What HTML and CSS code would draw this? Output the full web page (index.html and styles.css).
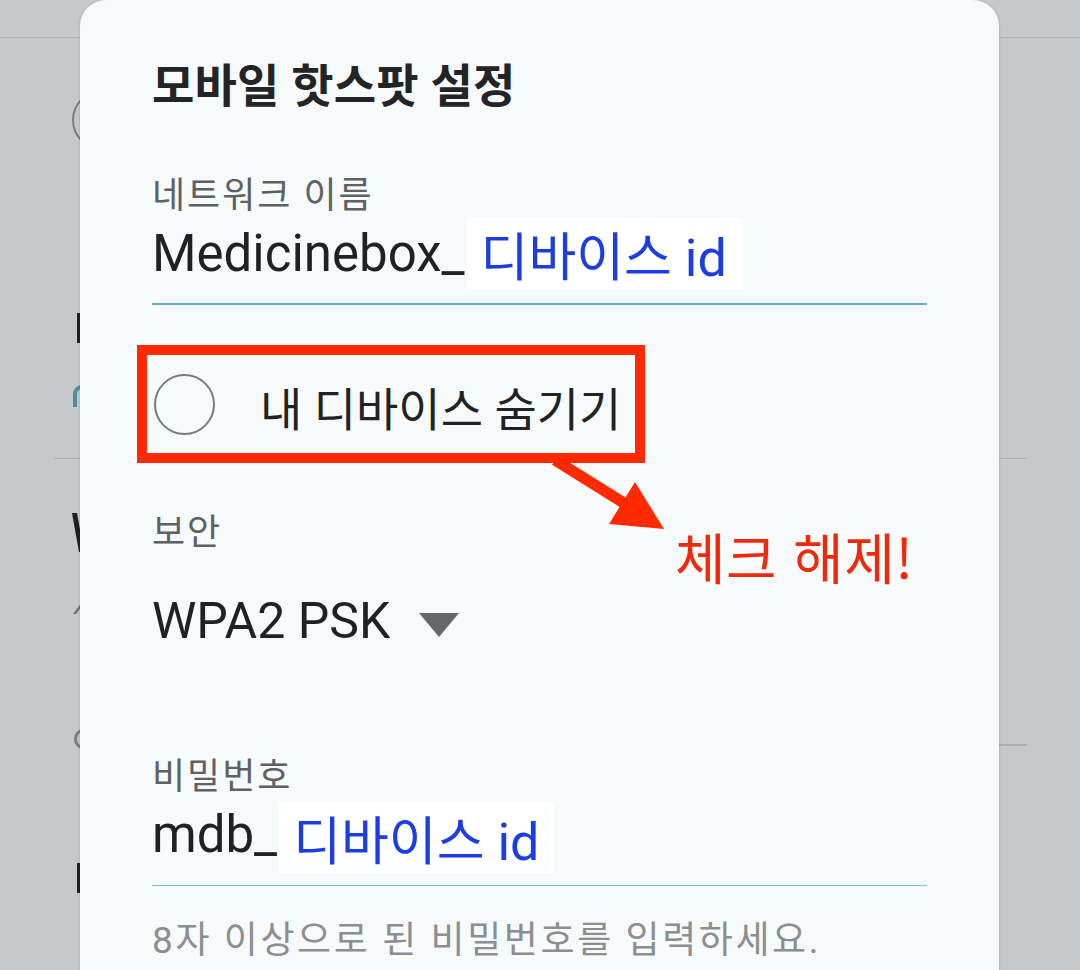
FILE: index.html
```html
<!DOCTYPE html>
<html lang="ko">
<head>
<meta charset="utf-8">
<title>모바일 핫스팟 설정</title>
<link rel="stylesheet" href="styles.css">
</head>
<body>
<div class="page" aria-hidden="true">
  <div class="topbar"></div>
  <div class="bg-list">
    <div class="bg-icon"></div>
    <div class="frag stem first"></div>
    <div class="frag hook"></div>
    <div class="bg-divider"></div>
    <div class="frag slant"></div>
    <div class="frag tick"></div>
    <div class="frag ring"></div>
    <div class="bg-divider right-only"></div>
    <div class="frag stem last"></div>
  </div>
</div>

<div class="dialog">
  <h1 class="title">모바일 핫스팟 설정</h1>

  <div class="field first">
    <div class="label">네트워크 이름</div>
    <div class="value-row underline thick">
      <span class="value">Medicinebox_</span><span class="tag">디바이스 id</span>
    </div>
  </div>

  <div class="check-box">
    <span class="radio"></span>
    <span class="check-text">내 디바이스 숨기기</span>
  </div>

  <div class="field security">
    <div class="label">보안</div>
    <div class="dropdown">
      <span class="value">WPA2 PSK</span>
      <span class="caret"></span>
    </div>
  </div>

  <div class="field password">
    <div class="label">비밀번호</div>
    <div class="value-row underline thin">
      <span class="value">mdb_</span><span class="tag">디바이스 id</span>
    </div>
    <div class="hint">8자 이상으로 된 비밀번호를 입력하세요.</div>
  </div>
</div>

<svg class="arrow" width="130" height="90" viewBox="0 0 130 90" aria-hidden="true">
  <line x1="10" y1="8" x2="82" y2="53" stroke="#ff2a00" stroke-width="11"/>
  <polygon points="64,72 90,30 119,77" fill="#ff2a00"/>
</svg>
<div class="note">체크 해제!</div>
</body>
</html>
```
FILE: styles.css
```css
html, body {
  margin: 0;
  padding: 0;
}
body {
  width: 1080px;
  height: 970px;
  overflow: hidden;
  position: relative;
  background: #c5c9ca;
  font-family: Roboto, "Noto Sans CJK KR", sans-serif;
}

/* background page (dimmed, mostly hidden behind the dialog) */
.page {
  height: 970px;
}
.topbar {
  height: 37px;
  border-bottom: 1px solid #afb3b4;
}
.bg-list {
  display: flex;
  flex-direction: column;
  align-items: flex-start;
}
.bg-icon {
  margin: 52px 0 0 72px;
  width: 60px;
  height: 60px;
  box-sizing: border-box;
  border: 2.5px solid #7b7e7f;
  border-radius: 50%;
}
.frag {
  flex: none;
}
.frag.stem {
  margin-left: 77px;
  width: 6px;
  height: 30px;
  background: #1d1f20;
}
.frag.stem.first { margin-top: 163px; }
.frag.stem.last { margin-top: 117px; }
.frag.hook {
  margin: 42px 0 0 73px;
  width: 14px;
  height: 22px;
  box-sizing: border-box;
  border-left: 4px solid #4b8fa6;
  border-top: 4px solid #4b8fa6;
  border-top-left-radius: 9px;
}
.bg-divider {
  align-self: stretch;
  margin: 51px 53px 0 54px;
  height: 1px;
  background: #aeb2b3;
}
.bg-divider.right-only {
  margin: -5px 53px 0 80px;
  height: 2px;
  background: #a9adae;
}
.frag.slant {
  margin: 54px 0 0 72px;
  width: 12px;
  height: 39px;
  background: #1d1f20;
  clip-path: polygon(0 0, 5px 0, 100% 100%, 7px 100%);
}
.frag.tick {
  margin: 50px 0 0 73px;
  width: 12px;
  height: 12px;
  background: #6f7374;
  clip-path: polygon(9px 0, 100% 0, 3px 100%, 0 100%);
}
.frag.ring {
  margin: 115px 0 0 74px;
  width: 18px;
  height: 20px;
  box-sizing: border-box;
  border: 3px solid #7a7d7e;
  border-radius: 50%;
}

/* dialog */
.dialog {
  position: absolute;
  left: 80px;
  top: 0;
  width: 919px;
  height: 1000px;
  box-sizing: border-box;
  padding: 61px 72px 0;
  background: #f6fafb;
  border-radius: 26px 26px 0 0;
  box-shadow: 0 0 3px rgba(0, 0, 0, 0.18);
}
.title {
  margin: 0;
  font-size: 46px;
  line-height: 50px;
  letter-spacing: 0.2px;
  font-weight: 700;
  color: #222425;
}
.label {
  font-size: 36px;
  line-height: 38px;
  letter-spacing: 2px;
  color: #5d6163;
}
.field.first { margin-top: 66px; }
.field.first .value-row { margin-top: 2px; }
.value-row {
  display: flex;
  align-items: center;
  height: 72px;
}
.value {
  font-size: 51px;
  color: #1f2122;
  white-space: nowrap;
}
.tag {
  height: 72px;
  display: flex;
  align-items: center;
  padding: 0 15px 0 14px;
  margin-left: 2px;
  background: #ffffff;
  color: #1b3de3;
  font-size: 52px;
  white-space: nowrap;
}
.underline.thick {
  padding-bottom: 14px;
  border-bottom: 2px solid #5cafc8;
}
.underline.thin {
  padding-bottom: 12px;
  border-bottom: 1px solid #7cc1d6;
}

.check-box {
  margin: 40px 0 0 -15px;
  width: 508px;
  height: 118px;
  box-sizing: border-box;
  border: 10px solid #ff2a00;
  display: flex;
  align-items: center;
  padding-left: 7px;
}
.radio {
  width: 61px;
  height: 61px;
  box-sizing: border-box;
  border: 2.5px solid #787b7c;
  border-radius: 50%;
  flex: none;
}
.check-text {
  margin-left: 45px;
  padding-top: 12px;
  font-size: 46px;
  line-height: 50px;
  color: #202324;
  white-space: nowrap;
}

.field.security { margin-top: 51px; }
.dropdown {
  margin-top: 39px;
  display: flex;
  align-items: center;
  height: 60px;
}
.dropdown .value {
  font-size: 50px;
  line-height: 60px;
}
.caret {
  margin: 7px 0 0 29px;
  width: 0;
  height: 0;
  border-left: 20px solid transparent;
  border-right: 20px solid transparent;
  border-top: 24px solid #646869;
}

.field.password { margin-top: 107px; }
.field.password .value-row { margin-top: 6px; height: 71px; }
.field.password .value { margin-bottom: 7px; }
.field.password .tag { height: 71px; }
.hint {
  margin-top: 34px;
  font-size: 37px;
  line-height: 42px;
  letter-spacing: 2.6px;
  color: #8b8e90;
  white-space: nowrap;
}

/* annotations drawn over the screenshot */
.arrow {
  position: absolute;
  left: 545px;
  top: 452px;
}
.note {
  position: absolute;
  left: 675px;
  top: 528px;
  font-family: "Noto Sans CJK KR", sans-serif;
  font-size: 55px;
  line-height: 55px;
  letter-spacing: 0.5px;
  color: #f0290b;
  white-space: nowrap;
}
```
